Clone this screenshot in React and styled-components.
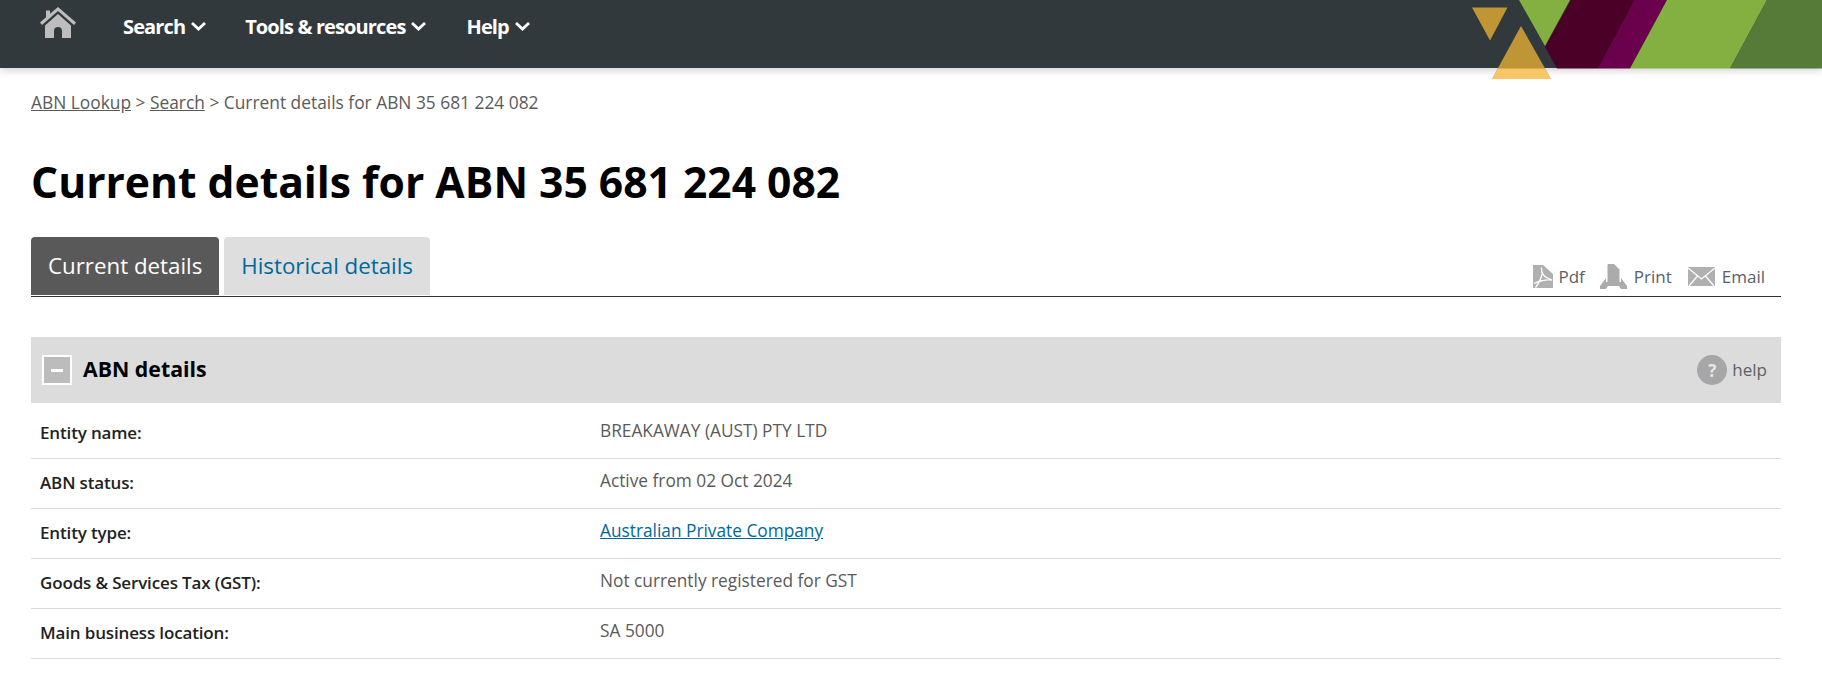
import React from "react";
import styled, { createGlobalStyle } from "styled-components";

const Global = createGlobalStyle`
  html, body { margin: 0; padding: 0; background: #fff; }
  body { font-family: "Open Sans", "Noto Sans", "Liberation Sans", sans-serif; color: #5a5a5a; font-size: 16px; }
`;
const Page = styled.div`
  width: 1822px;
  height: 696px;
  overflow: hidden;
  position: relative;
`;
const Nav = styled.nav`
  position: relative;
  height: 68px;
  background: #31393c;
  box-shadow: 0 2px 8px rgba(0,0,0,.2);
  display: flex;
  align-items: flex-start;
  padding-left: 40px;
`;
const Home = styled.a`
  display: block;
  width: 36px;
  height: 32px;
  margin-top: 7px;
  margin-right: 47px;
`;
const NavItem = styled.a`
  display: flex;
  align-items: center;
  gap: 5px;
  margin-right: ${p => p.$gap}px;
  height: 52px;
  color: #fff;
  font-size: 20px;
  font-weight: 700;
  letter-spacing: -0.88px;
`;
const Banner = styled.svg`
  position: absolute;
  right: 0;
  top: 0;
  width: 382px;
  height: 82px;
  z-index: 2;
`;
const Main = styled.main`
  padding: 0 41px 0 31px;
`;
const Crumbs = styled.div`
  margin-top: 23px;
  font-size: 17.35px;
  line-height: 22px;
  a { color: #5a5a5a; text-decoration: underline; }
`;
const Title = styled.h1`
  margin: 42px 0 0;
  font-size: 42.6px;
  line-height: 52px;
  font-weight: 700;
  color: #000;
`;
const TabRow = styled.div`
  margin-top: 30px;
  display: flex;
  align-items: flex-end;
  height: 59px;
  border-bottom: 1px solid #333;
  gap: 5px;
`;
const Tab = styled.a`
  height: 58px;
  box-sizing: border-box;
  margin-bottom: 1px;
  padding: 0 17px 2px;
  display: flex;
  align-items: center;
  font-size: 22.3px;
  border-radius: 4px 4px 0 0;
  background: ${p => (p.$active ? "#595959" : "#dedede")};
  color: ${p => (p.$active ? "#fff" : "#00689d")};
`;
const Tools = styled.div`
  margin-left: auto;
  display: flex;
  align-items: center;
  height: 40px;
  margin-right: 16px;
`;
const Tool = styled.a`
  display: flex;
  align-items: center;
  gap: ${p => p.$gap}px;
  margin-left: ${p => p.$left}px;
  font-size: 17px;
  color: #5a6068;
`;
const PanelHead = styled.div`
  margin-top: 40px;
  height: 66px;
  background: #dcdcdc;
  display: flex;
  align-items: center;
  padding: 0 14px 0 11px;
`;
const Toggle = styled.span`
  width: 30px;
  height: 30px;
  box-sizing: border-box;
  border: 2px solid #fff;
  background: #bcbcbc;
  display: flex;
  align-items: center;
  justify-content: center;
  margin-right: 11px;
  &::before { content: ""; width: 12px; height: 3px; background: #fff; }
`;
const PanelTitle = styled.h2`
  margin: 0;
  padding-bottom: 4px;
  font-size: 21.3px;
  font-weight: 700;
  color: #000;
`;
const Help = styled.a`
  margin-left: auto;
  display: flex;
  align-items: center;
  gap: 5px;
  font-size: 17px;
  color: #5a6068;
`;
const HelpText = styled.span`
  padding-bottom: 2px;
`;
const HelpDot = styled.span`
  width: 30px;
  height: 30px;
  border-radius: 50%;
  background: #a6a6a6;
  color: #e8e8e8;
  font-weight: 700;
  font-size: 17px;
  display: flex;
  align-items: center;
  justify-content: center;
`;
const Rows = styled.div`
  padding-top: 6px;
`;
const Row = styled.div`
  height: 50px;
  box-sizing: border-box;
  display: grid;
  grid-template-columns: 560px 1fr;
  border-bottom: 1px solid #d9d9d9;
  padding: 0 0 5px 9px;
  align-items: center;
`;
const Label = styled.div`
  padding-top: 2px;
  font-size: 17px;
  font-weight: 600;
  color: #222;
  letter-spacing: -0.15px;
`;
const Value = styled.div`
  padding-bottom: 2px;
  font-size: 17.3px;
  color: #5a5a5a;
  a { color: #00689d; text-decoration: underline; }
`;

const Chevron = () => (
  <svg width="17" height="10" viewBox="0 0 17 10" fill="none" stroke="#fff" strokeWidth="2.8">
    <path d="M2 2l6.500 6 6.500-6" />
  </svg>
);

const rows = [
  ["Entity name:", "BREAKAWAY (AUST) PTY LTD"],
  ["ABN status:", "Active from 02 Oct 2024"],
  ["Entity type:", <a key="a">Australian Private Company</a>],
  ["Goods & Services Tax (GST):", "Not currently registered for GST"],
  ["Main business location:", "SA 5000"],
];

export default function App() {
  return (
    <Page>
      <Global />
      <Nav>
        <Home>
          <svg width="36" height="32" viewBox="0 0 36 32">
            <path d="M18 0L36 15.500 34 18 18 4 2 18 0 15.500 6 10.200V3.500h4v3.200z" fill="#bdbdbd" />
            <path d="M18 7L5 18.500V31h9v-7a4 4 0 0 1 8 0v7h9V18.500z" fill="#bdbdbd" />
          </svg>
        </Home>
        <NavItem $gap={38}>Search <Chevron /></NavItem>
        <NavItem $gap={39}>Tools &amp; resources <Chevron /></NavItem>
        <NavItem $gap={0}>Help <Chevron /></NavItem>
        <Banner viewBox="1440 0 382 82">
          <polygon points="1519,0 1570,0 1545,46" fill="#84b041" />
          <polygon points="1571,0 1635,0 1598,68.5 1557,68.5 1545,47" fill="#4a0027" />
          <polygon points="1635,0 1667,0 1630,68.5 1598,68.5" fill="#6b004c" />
          <polygon points="1667,0 1767,0 1730,68.5 1630,68.5" fill="#84b041" />
          <polygon points="1767,0 1822,0 1822,68.5 1730,68.5" fill="#567b39" />
          <polygon points="1472,7.5 1507.5,7.5 1490,40.5" fill="#bf9535" />
          <polygon points="1521,26 1551,79 1492,79" fill="#bf9535" />
          <polygon points="1498,68.5 1545,68.5 1551,79 1492,79" fill="#f6c667" />
        </Banner>
      </Nav>
      <Main>
        <Crumbs><a>ABN Lookup</a> &gt; <a>Search</a> &gt; Current details for ABN 35 681 224 082</Crumbs>
        <Title>Current details for ABN 35 681 224 082</Title>
        <TabRow>
          <Tab $active>Current details</Tab>
          <Tab>Historical details</Tab>
          <Tools>
            <Tool $gap={5} $left={0}>
              <svg width="20" height="23" viewBox="0 0 20 23">
                <path d="M0 0h10l10 9v14H0z" fill="#b0b0b0" />
                <path d="M8.500 2.500c-.5 5 1 9 10.500 12.500M9 9c-1 5-3 9-6.500 13.500M1 18.500c6-3 12-4 18-3.500" fill="none" stroke="#fff" strokeWidth="1.300" />
              </svg>
              Pdf
            </Tool>
            <Tool $gap={7} $left={15}>
              <svg width="27" height="25" viewBox="0 0 27 25">
                <path d="M8 0h6l5.500 5.500V18H7.500V1z" fill="#ababab" />
                <path d="M6 14L0 22v3h6l2-3h11l2 3h6v-3l-6-8v4H6z" fill="#ababab" />
              </svg>
              Print
            </Tool>
            <Tool $gap={7} $left={16}>
              <svg width="27" height="19" viewBox="0 0 27 19">
                <rect width="27" height="19" fill="#b0b0b0" />
                <path d="M0 1l13.500 11L27 1M1 19l8.500-10M26 19l-8.500-10" fill="none" stroke="#fff" strokeWidth="1.300" />
              </svg>
              Email
            </Tool>
          </Tools>
        </TabRow>
        <PanelHead>
          <Toggle />
          <PanelTitle>ABN details</PanelTitle>
          <Help><HelpDot>?</HelpDot><HelpText>help</HelpText></Help>
        </PanelHead>
        <Rows>
          {rows.map(([l, v]) => (
            <Row key={l}>
              <Label>{l}</Label>
              <Value>{v}</Value>
            </Row>
          ))}
        </Rows>
      </Main>
    </Page>
  );
}
